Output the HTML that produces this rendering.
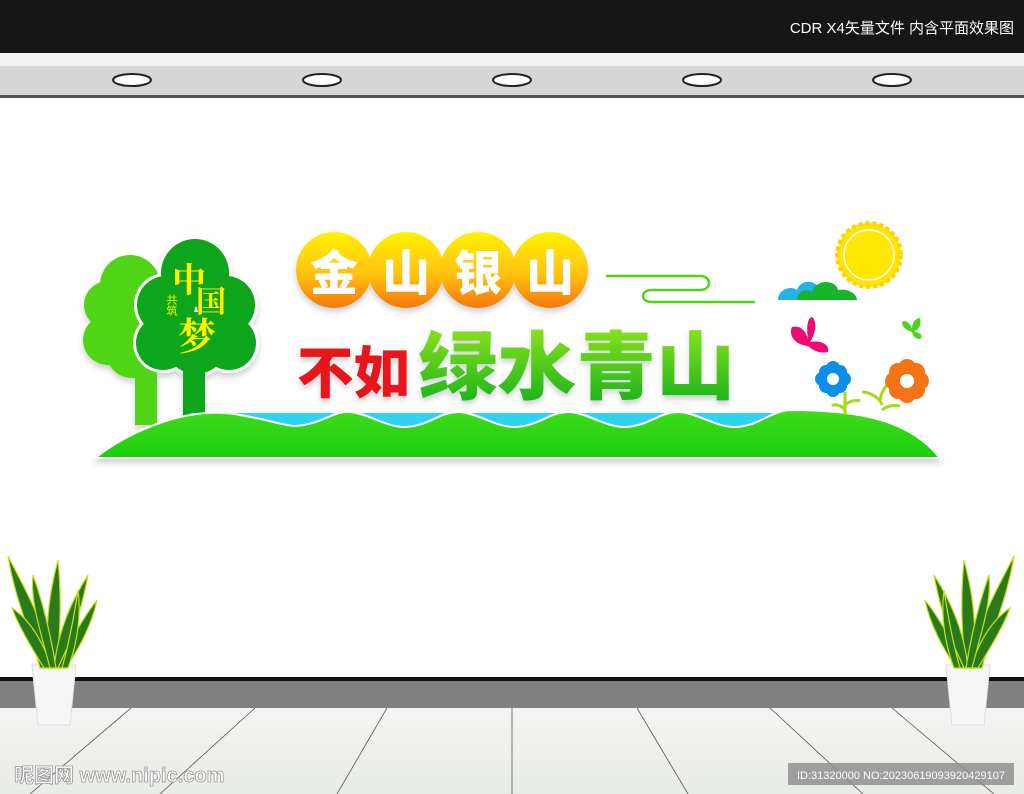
<!DOCTYPE html>
<html><head><meta charset="utf-8"><style>
html,body{margin:0;padding:0;width:1024px;height:794px;overflow:hidden;background:#fff}
svg{display:block}
</style></head><body>
<svg width="1024" height="794" viewBox="0 0 1024 794" xmlns="http://www.w3.org/2000/svg">
<defs>
<linearGradient id="gold" x1="0" y1="0" x2="0" y2="1"><stop offset="0" stop-color="#fff200"/><stop offset="0.55" stop-color="#ffc20e"/><stop offset="1" stop-color="#f7760f"/></linearGradient>
<linearGradient id="grn" x1="0" y1="0" x2="0" y2="1"><stop offset="0" stop-color="#8be21c"/><stop offset="1" stop-color="#12b01e"/></linearGradient>
<linearGradient id="hill" x1="0" y1="0" x2="0" y2="1"><stop offset="0" stop-color="#3ddc14"/><stop offset="1" stop-color="#1ccf10"/></linearGradient>
<linearGradient id="floor" x1="0" y1="0" x2="0" y2="1"><stop offset="0" stop-color="#f4f4f2"/><stop offset="1" stop-color="#e8ebe6"/></linearGradient>
<filter id="sh" x="-10%" y="-10%" width="120%" height="130%"><feDropShadow dx="0" dy="4" stdDeviation="3" flood-color="#000" flood-opacity="0.18"/></filter>
</defs>
<rect x="0" y="0" width="1024" height="53" fill="#161616"/>
<text x="1014" y="33" text-anchor="end" fill="#fff" font-family="Liberation Sans, Noto Sans CJK SC, sans-serif" font-size="15">CDR X4矢量文件  内含平面效果图</text>
<rect x="0" y="53" width="1024" height="13" fill="#f2f2f2"/>
<rect x="0" y="66" width="1024" height="30" fill="#d6d6d6"/>
<rect x="0" y="95" width="1024" height="3" fill="#555"/>
<g fill="#fff" stroke="#222" stroke-width="2">
<ellipse cx="132" cy="80" rx="19" ry="6"/><ellipse cx="322" cy="80" rx="19" ry="6"/><ellipse cx="512" cy="80" rx="19" ry="6"/><ellipse cx="702" cy="80" rx="19" ry="6"/><ellipse cx="892" cy="80" rx="19" ry="6"/>
</g>
<rect x="0" y="677" width="1024" height="4" fill="#111"/>
<rect x="0" y="681" width="1024" height="27" fill="#808080"/>
<rect x="0" y="708" width="1024" height="86" fill="url(#floor)"/>
<g stroke="#555" stroke-width="0.8">
<line x1="131" y1="708" x2="30" y2="794"/><line x1="255" y1="708" x2="160" y2="794"/><line x1="387" y1="708" x2="337" y2="794"/><line x1="512" y1="708" x2="512" y2="794"/><line x1="637" y1="708" x2="688" y2="794"/><line x1="770" y1="708" x2="863" y2="794"/><line x1="892" y1="708" x2="994" y2="794"/>
</g>
<g filter="url(#sh)">
<!-- light tree -->
<g fill="#4fd516">
<rect x="135" y="340" width="22" height="85"/>
<circle cx="130" cy="285" r="30"/><circle cx="108" cy="305" r="24"/><circle cx="108" cy="340" r="25"/><circle cx="132" cy="352" r="26"/><circle cx="145" cy="315" r="25"/>
</g>
<!-- dark tree outline -->
<g fill="#fff">
<circle cx="195" cy="273" r="37"/><circle cx="166" cy="305" r="32"/><circle cx="226" cy="305" r="32"/><circle cx="163" cy="343" r="30"/><circle cx="229" cy="343" r="30"/><circle cx="196" cy="343" r="34"/>
</g>
<g fill="#0aa51a">
<rect x="183" y="360" width="22" height="62"/>
<circle cx="195" cy="273" r="34"/><circle cx="166" cy="305" r="29"/><circle cx="226" cy="305" r="29"/><circle cx="163" cy="343" r="27"/><circle cx="229" cy="343" r="27"/><circle cx="196" cy="343" r="31"/>
</g>
<text x="172" y="292" font-family="Liberation Serif, Noto Serif CJK SC, serif" font-size="34" font-weight="bold" fill="#fff200">中</text>
<text x="196" y="312" font-family="Liberation Serif, Noto Serif CJK SC, serif" font-size="30" font-weight="bold" fill="#fff200">国</text>
<text x="178" y="350" font-family="Liberation Serif, Noto Serif CJK SC, serif" font-size="38" font-weight="bold" fill="#fff200">梦</text>
<text x="171" y="294" font-family="Liberation Sans, Noto Sans CJK SC, sans-serif" font-size="11" fill="#fff200" writing-mode="tb">共筑</text>
<rect x="190" y="413" width="620" height="20" fill="#2fd3f2"/>
<path d="M95 458 C130 430 190 405 240 415 C270 420 280 425 295 426 C320 425 335 410 350 412 C370 414 385 427 405 427 C430 426 440 411 460 412 C480 414 495 427 515 427 C540 426 550 411 570 412 C590 414 605 427 625 427 C650 426 660 411 680 412 C700 414 715 427 735 427 C760 426 770 411 790 410 C860 410 910 420 940 458 Z" fill="url(#hill)" stroke="#fff" stroke-width="2"/>
<circle cx="334" cy="270" r="38" fill="url(#gold)"/><circle cx="406" cy="270" r="38" fill="url(#gold)"/><circle cx="478" cy="270" r="38" fill="url(#gold)"/><circle cx="550" cy="270" r="38" fill="url(#gold)"/>
</g>
<g font-family="Liberation Sans, Noto Sans CJK SC, sans-serif" font-weight="900">
<text x="310" y="290" font-size="48" fill="#fff">金</text><text x="382" y="290" font-size="48" fill="#fff">山</text><text x="454" y="290" font-size="48" fill="#fff">银</text><text x="526" y="290" font-size="48" fill="#fff">山</text>
<text x="297" y="393" font-size="56" fill="#e8141b" filter="url(#sh)" textLength="113" lengthAdjust="spacingAndGlyphs">不如</text>
<text x="418" y="393" font-size="74" fill="url(#grn)" filter="url(#sh)" textLength="317" lengthAdjust="spacingAndGlyphs">绿水青山</text>
</g>
<path d="M606 276 L700 276 C712 276 712 290 700 290 L652 290 C640 290 640 302 652 302 L755 302" fill="none" stroke="#4fd516" stroke-width="2.5"/>
<circle cx="869" cy="255" r="32" fill="#ffe500" stroke="#ffd200" stroke-width="4" stroke-dasharray="4 3"/>
<circle cx="869" cy="255" r="25" fill="#ffe800" stroke="#fff" stroke-width="1.5"/>
<path d="M778 300 C778 290 790 285 797 290 C800 280 815 278 820 290 L820 300 Z" fill="#22b3ea"/>
<path d="M797 300 C797 292 805 288 812 292 C815 280 835 278 838 290 C848 288 857 294 857 300 Z" fill="#16b52a"/>
<path d="M808 346 C795 345 788 335 792 327 C800 325 806 330 808 340 C806 325 808 318 812 317 C818 322 815 335 810 342 C820 340 830 344 828 352 C820 354 812 350 808 346 Z" fill="#ec0c72"/>
<path d="M912 332 C905 330 900 324 903 321 C908 321 911 325 912 329 C912 322 916 318 920 318 C922 325 918 330 914 332 C920 332 924 336 920 339 C915 339 913 336 912 332 Z" fill="#4ed323"/>
<path d="M845 392 L845 415 M845 405 C850 400 858 400 860 401 M845 410 C840 404 834 404 832 406" stroke="#a6d91a" stroke-width="3" fill="none"/>
<path d="M880 400 C882 388 890 380 898 378 M882 405 C880 398 870 392 862 392 M882 410 C888 405 896 405 900 406" stroke="#a6d91a" stroke-width="3" fill="none"/>
<g fill="#0d8ee8"><circle cx="826" cy="372" r="7"/><circle cx="840" cy="372" r="7"/><circle cx="826" cy="386" r="7"/><circle cx="840" cy="386" r="7"/><circle cx="833" cy="368" r="7"/><circle cx="833" cy="390" r="7"/><circle cx="822" cy="379" r="7"/><circle cx="844" cy="379" r="7"/></g>
<circle cx="833" cy="379" r="6" fill="#fff"/>
<g fill="#f47314"><circle cx="898" cy="372" r="9"/><circle cx="916" cy="372" r="9"/><circle cx="898" cy="390" r="9"/><circle cx="916" cy="390" r="9"/><circle cx="907" cy="368" r="9"/><circle cx="907" cy="394" r="9"/><circle cx="894" cy="381" r="9"/><circle cx="920" cy="381" r="9"/></g>
<circle cx="907" cy="381" r="7" fill="#fff"/>
<g id="plant">
<path d="M32 665 L76 665 L70 725 L38 725 Z" fill="#f6f6f6" stroke="#ddd"/>
<g fill="#2a7a1c" stroke="#c8e01a" stroke-width="1.2">
<path d="M40 668 C30 630 15 600 8 556 C25 590 45 620 50 668 Z"/>
<path d="M48 668 C45 620 50 590 58 560 C62 600 60 640 56 668 Z"/>
<path d="M54 668 C58 630 72 600 88 575 C82 610 70 640 62 668 Z"/>
<path d="M44 668 C30 645 18 625 12 608 C30 620 42 640 52 668 Z"/>
<path d="M58 668 C70 640 85 615 97 600 C92 625 78 650 66 668 Z"/>
<path d="M50 668 C40 630 30 600 33 575 C42 600 50 630 56 668 Z"/>
<path d="M62 668 C70 640 75 610 78 590 C82 620 75 650 68 668 Z"/>
</g>
</g>
<use href="#plant" transform="translate(1022 0) scale(-1 1)"/>
<text x="14" y="782" font-family="Liberation Sans, Noto Sans CJK SC, sans-serif" font-size="20" font-weight="bold" fill="#fff" stroke="#999" stroke-width="0.8">昵图网 www.nipic.com</text>
<rect x="788" y="763" width="226" height="22" fill="#8a8a8a" opacity="0.8"/>
<text x="797" y="779" font-family="Liberation Sans, sans-serif" font-size="11" fill="#fff">ID:31320000 NO:20230619093920429107</text>
</svg>
</body></html>
